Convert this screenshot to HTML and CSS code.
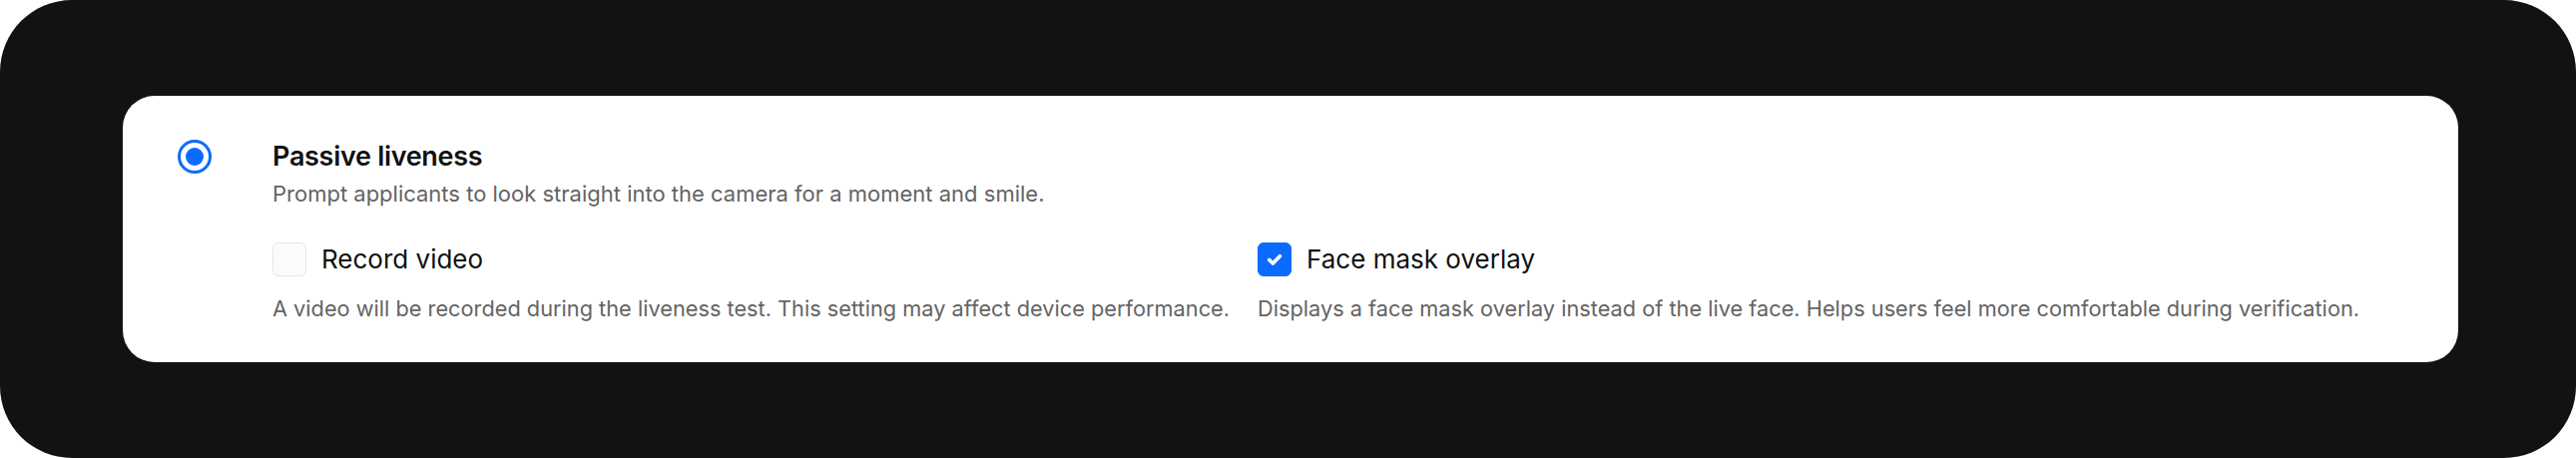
FILE: index.html
```html
<!DOCTYPE html>
<html lang="en">
<head>
<meta charset="utf-8">
<title>Passive liveness</title>
<link rel="stylesheet" href="styles.css">
</head>
<body>
<div class="frame">
  <div class="card">
    <div class="radio" role="radio" aria-checked="true"><span class="radio-dot"></span></div>
    <div class="content">
      <div class="title">Passive liveness</div>
      <div class="subtitle">Prompt applicants to look straight into the camera for a moment and smile.</div>
      <div class="options">
        <div class="option">
          <label class="check-row">
            <span class="checkbox"></span>
            <span class="check-label">Record video</span>
          </label>
          <div class="option-desc">A video will be recorded during the liveness test. This setting may affect device performance.</div>
        </div>
        <div class="option">
          <label class="check-row">
            <span class="checkbox checked">
              <svg viewBox="0 0 24 24" width="34" height="34" aria-hidden="true"><path d="M8 12.3 L10.8 15 L16 9.5" fill="none" stroke="#fff" stroke-width="2.7" stroke-linecap="round" stroke-linejoin="round"/></svg>
            </span>
            <span class="check-label">Face mask overlay</span>
          </label>
          <div class="option-desc">Displays a face mask overlay instead of the live face. Helps users feel more comfortable during verification.</div>
        </div>
      </div>
    </div>
  </div>
</div>
</body>
</html>
```
FILE: styles.css
```css
html, body {
  margin: 0;
  padding: 0;
  background: #ffffff;
}

body {
  font-family: Inter, "Noto Sans", "Liberation Sans", sans-serif;
  -webkit-font-smoothing: antialiased;
}

.frame {
  box-sizing: border-box;
  width: 2581px;
  height: 459px;
  background: #121212;
  border-radius: 72px;
  padding: 96px 118px 96px 123px;
  display: flex;
  flex-direction: column;
}

.card {
  flex: 1;
  background: #ffffff;
  border-radius: 32px;
  box-sizing: border-box;
  padding: 44px 55px 0 55px;
  display: flex;
  align-items: flex-start;
  gap: 61px;
}

.radio {
  box-sizing: border-box;
  width: 34px;
  height: 34px;
  border-radius: 50%;
  border: 3.5px solid #0b6bff;
  display: flex;
  align-items: center;
  justify-content: center;
  flex: none;
}

.radio-dot {
  width: 18px;
  height: 18px;
  border-radius: 50%;
  background: #0b6bff;
}

.content {
  display: flex;
  flex-direction: column;
}

.title {
  font-size: 27px;
  line-height: 34px;
  font-weight: 600;
  letter-spacing: -0.3px;
  color: #111111;
}

.subtitle {
  margin-top: 4px;
  font-size: 22px;
  line-height: 32px;
  color: #646464;
}

.options {
  margin-top: 33px;
  display: flex;
  gap: 28px;
}

.option {
  display: flex;
  flex-direction: column;
}

.check-row {
  display: flex;
  align-items: center;
  gap: 15px;
  height: 34px;
}

.checkbox {
  box-sizing: border-box;
  width: 34px;
  height: 34px;
  border-radius: 6px;
  border: 1.5px solid #e6e6e6;
  background: #fbfbfb;
  flex: none;
  display: flex;
  align-items: center;
  justify-content: center;
}

.checkbox.checked {
  background: #0b6bff;
  border-color: #0b6bff;
}

.checkbox svg {
  display: block;
}

.check-label {
  font-size: 26px;
  line-height: 34px;
  color: #111111;
}

.option-desc {
  margin-top: 17px;
  font-size: 21.75px;
  line-height: 30px;
  color: #646464;
  white-space: nowrap;
}
```
